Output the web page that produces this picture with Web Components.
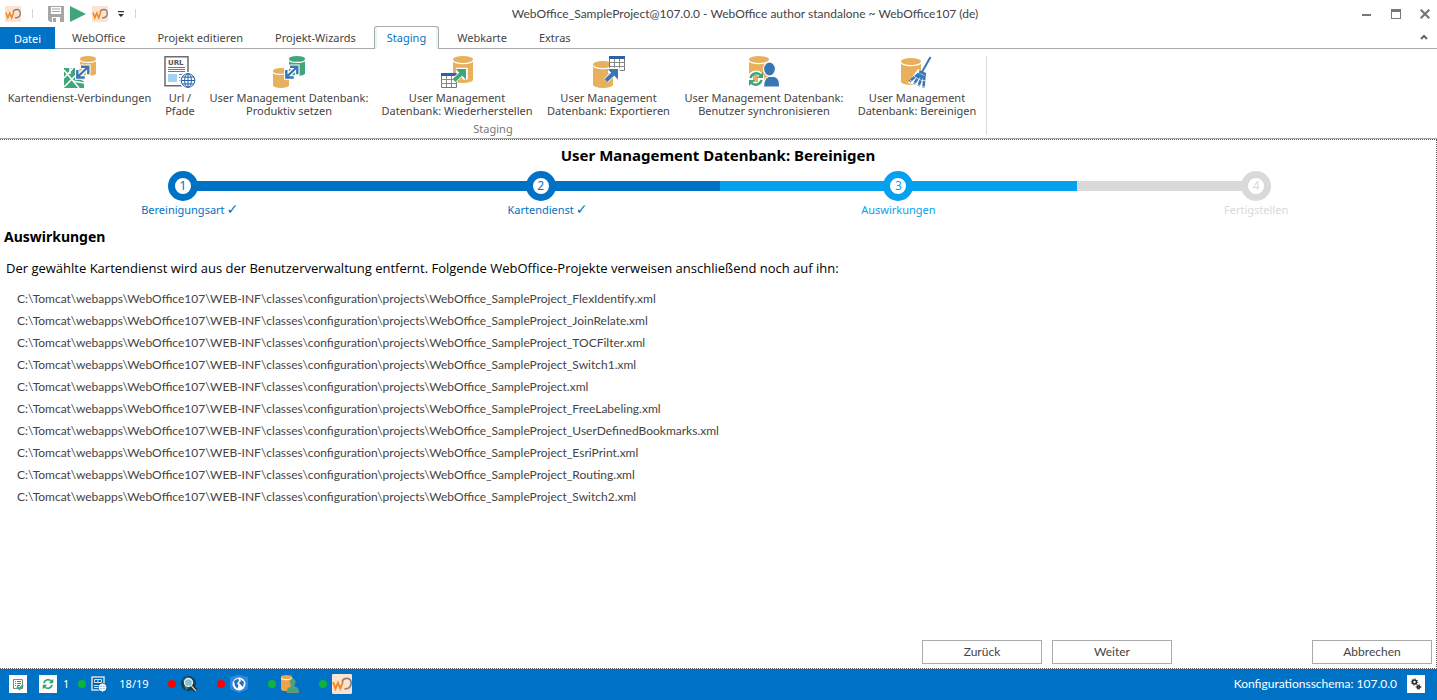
<!DOCTYPE html>
<html lang="de">
<head>
<meta charset="utf-8">
<title>WebOffice author standalone</title>
<style>
html, body { height: 100%; margin: 0; }
body {
  --ui: "Noto Sans", "Open Sans", sans-serif;
  --wide: Lato, "Noto Sans", sans-serif;
  --blue: #0072c6;
  --cyan: #04a2ee;
  --ink: #444;
  font: 11px/13px var(--ui);
  color: var(--ink);
  background: #fff;
}
</style>
</head>
<body>
<wo-app></wo-app>
<script>
const define = (name, html, setup) => {
  const template = document.createElement('template');
  template.innerHTML = html;
  customElements.define(name, class extends HTMLElement {
    constructor() {
      super();
      this.attachShadow({ mode: 'open' }).append(template.content.cloneNode(true));
    }
    connectedCallback() { if (setup) setup(this, this.shadowRoot); }
  });
};

/* ---------- icons ---------- */
const db = (x, y, w, h, c) => {
  const r = w / 2, k = w / 6;
  return `<path fill="${c}" d="M${x} ${y + k}a${r} ${k} 0 0 1 ${w} 0v${h - 2 * k}a${r} ${k} 0 0 1-${w} 0z"/>
  <path fill="none" stroke="#fff" stroke-width="1.200" d="M${x} ${y + k + 1}a${r} ${k} 0 0 0 ${w} 0"/>`;
};
const grid = (x, y) => `<path fill="#fff" stroke="#777" d="M${x + .5} ${y + .5}h15v14h-15z"/>
  <path fill="#2f62a3" d="M${x} ${y}h16v3h-16z"/>
  <path stroke="#8a8a8a" d="M${x + 5.5} ${y + 3}v11M${x + 10.5} ${y + 3}v11M${x} ${y + 6.5}h16M${x} ${y + 10.5}h16"/>`;
const bothLines = 'M14 20.500L23.500 11.500M13.300 14v7.500h7.500M17 10.800h7.300v7.500';
const both = `<g fill="none" stroke-linecap="square"><path d="${bothLines}" stroke="#fff" stroke-width="4.600"/><path d="${bothLines}" stroke="#3a76b4" stroke-width="2.400" stroke-linecap="butt"/></g>`;
const arrow = c => `<path d="M13 24.500L23 15M15 14.500h9v9" fill="none" stroke="#fff" stroke-width="5.500"/>
  <path d="M13 24.500L22 16" stroke="${c}" stroke-width="4"/><path fill="${c}" d="M15 13h10v10.500l-3-3-5-5z"/>`;
const sync = (c, w) => `<g fill="none" stroke="${c}" stroke-width="${w}"><path d="M2.500 7a6 6 0 0 1 10.500-2.500M13.500 9a6 6 0 0 1-10.500 2.500"/></g>
  <path fill="${c}" d="M15 1v6h-6zM1 15v-6h6z"/>`;
const wd = `<rect width="16" height="16" rx="1" fill="#fde3cd"/>
  <path d="M8.300 6.500C8.300 4.500 10 3.500 12 3.500c2.300 0 3.400 1.700 3.300 4-.1 3-2.200 4.600-5.300 4.300" fill="none" stroke="#8b817b" stroke-width="1.400"/>
  <path d="M.9 6.500l1.900 5.200 2-4.700 1.900 4.700 2-5.200" fill="none" stroke="#f08a24" stroke-width="1.600"/>`;
const globe = (x, y, r, c, bg) => `<g transform="translate(${x} ${y})" fill="none" stroke="${c}"><circle r="${r}" fill="${bg}"/>
  <ellipse rx="${r / 2}" ry="${r}"/><path d="M0-${r}v${2 * r}M-${r} 0h${2 * r}M-${r * .85}-${r / 2}h${r * 1.7}M-${r * .85} ${r / 2}h${r * 1.7}"/></g>`;
const O = '#e8b05c', G = '#3fa67c', B = '#3a76b4';
const ICONS = {
  wd: [16, wd],
  save: [16, `<path fill="#a6a6a6" d="M0 0h16v16H2l-2-2z"/><path fill="#fff" d="M3 1h10v7H3zM4 11h8v5H4z"/>
    <path fill="#a6a6a6" d="M4 2.500h8v1H4zM4 5h8v1H4zM5 12h3v4H5z"/>`],
  play: [16, `<path fill="#3fa67c" d="M0 0l16 8-16 8z"/>`],
  more: [8, `<path fill="#333" d="M1 1h6v1.200H1zM1 4h6L4 7z"/>`],
  min: [10, `<path fill="#777" d="M0 5h9v2H0z"/>`],
  max: [10, `<path fill="#777" d="M0 0h10v10H0z"/><path fill="#fff" d="M1 3h8v6H1z"/>`],
  close: [10, `<path stroke="#777" stroke-width="2.200" d="M.7.700l8.600 8.600M9.300.7L.7 9.300"/>`],
  up: [8, `<path fill="none" stroke="#666" stroke-width="2" d="M1 6l3-3 3 3"/>`],
  connections: [32, `<path fill="${G}" d="M0 12h20v20H0z"/>
    <path stroke="#fff" stroke-width="1.500" fill="none" d="M0 14l15 18M0 31l15-15M0 22L9 12M6 12v6M9 25l11 2M13 20l7 5"/>${db(16, 0, 16, 20, O)}${both}`],
  url: [32, `<path fill="#fff" stroke="#6b6b6b" stroke-width="1.500" d="M1 .8h23v29H1z"/>
    <text x="4" y="9" font-size="7" font-weight="bold" font-family="DejaVu Sans, sans-serif" fill="#555">URL</text>
    <path stroke="#777" d="M4 11.500h17M4 13.500h17M4 15.500h17M15 18.500h6M15 21.500h3M15 24.500h2"/><path fill="#a3d3f2" d="M4 18h9v8H4z"/>
    <circle cx="24" cy="24.500" r="8.500" fill="#fff"/>${globe(24, 24.5, 6.8, '#2360a5', '#fff')}`],
  productive: [32, `${db(0, 12, 16, 20, O)}${db(16, 0, 16, 20, G)}${both}`],
  restore: [32, `${db(12, 0, 20, 27, O)}${grid(0, 17)}${arrow(G)}`],
  export: [32, `${db(0, 5, 20, 27, O)}${grid(16, 0)}${arrow(B)}`],
  users: [32, `${db(1, 0, 20, 27, O)}<path fill="${B}" stroke="#fff" stroke-width="1.200" d="M15.500 31c0-6 1-9 5-10.500h6c4 1.500 5.500 4 5 10.500z"/>
    <ellipse cx="21.500" cy="13" rx="6" ry="7" fill="${B}" stroke="#fff" stroke-width="1.200"/>
    <circle cx="8" cy="23" r="8.500" fill="#fff"/><path fill="${O}" d="M5 19h5v7H5z"/><g transform="translate(0 15)">${sync(G, 2.4)}</g>`],
  clean: [32, `${db(0, 2, 20, 27, O)}<path stroke="#fff" stroke-width="4" d="M20 17l10-15"/><path fill="#fff" d="M17 13l10 5-3 14-17-5z"/>
    <path stroke="${B}" stroke-width="2" d="M21 16l8.500-15"/><path fill="${B}" d="M18.500 14l6.500 3v3l-7-3z"/>
    <path stroke="${B}" stroke-width="2.600" stroke-dasharray="5 .6" d="M18 17.500l-9.500 8M19.500 18l-6.500 10M21.500 19l-4 11M23.500 19.500l-1 12"/>`],
  check: [18, `<path fill="#fff" d="M0 0h18v18H0z"/><path fill="none" stroke="#7286a0" d="M4.500 4.500h9v9h-9z"/><path stroke="#4a80bd" d="M6 6.500h1M8 6.500h4M6 8.500h1M8 8.500h4M6 10.500h1M8 10.500h3"/><path fill="none" stroke="${G}" stroke-width="2" d="M8 11.500l2.500 2.500 3.500-4"/>`],
  refresh: [18, `<path fill="#fff" d="M0 0h18v18H0z"/><g transform="translate(3 3) scale(.75)">${sync('#2f9c72', 2)}</g>`],
  server: [16, `<path fill="#0067b5" stroke="#ddd" stroke-width="1.500" d="M1 1h12v13H1z"/><path stroke="#ddd" fill="none" d="M3.500 3.500h7v3h-7zM3 9.500h6M3 11.500h4M6 5h2"/><circle cx="11.500" cy="11.500" r="4.500" fill="#0067b5"/>${globe(11.5, 11.5, 3.5, '#fff', '#1c62a8')}`],
  search: [16, `<circle cx="7.500" cy="7.500" r="7.500" fill="#12405c"/><path fill="#38824f" d="M2 4l4-3 3 2-5 5zM3 10l3-1 1 4-2 1z"/><circle cx="7.500" cy="6.500" r="4" fill="#86c0d4" stroke="#e8f0f2" stroke-width="1.300"/><path stroke="#222" stroke-width="4" d="M10.500 10l4.500 5"/><path stroke="#c9c9b8" stroke-width="1.600" d="M10.500 10l4.500 5"/>`],
  shield: [18, `<path fill="#2b8ae0" d="M9 0l9 2v12l-9 4-9-4V2z"/><circle cx="9" cy="9" r="6.500" fill="#fff"/><path fill="#2570bd" d="M4 6l4-2.500 1 2-2 3 1.500 2-1 3L5 11zM10 4l4 3-1 5-2-2-2-2 2-2z"/>`],
  dbuser: [18, `${db(0, 0, 11, 16, '#f0a44a')}<path fill="${G}" stroke="#8d9477" stroke-width=".8" d="M6 17.500c0-4 1-5 4-5.500v-2c-2-3-1-6 1.500-6s3.500 3 1.500 6v2c4 .5 4.500 2 4.500 5.500z"/>`],
  gear: [18, `<path fill="#fff" d="M0 0h18v18H0z"/><g fill="none" stroke="#222"><circle cx="7.500" cy="7" r="2" stroke-width="1.600"/><circle cx="7.500" cy="7" r="3.200" stroke-dasharray="1 1.500"/><circle cx="11.500" cy="12" r="1.200" stroke-width="1.500"/><circle cx="11.500" cy="12" r="2.300" stroke-dasharray="1 1"/></g>`]
};

define('wo-icon', `<style>:host{display:block;flex:none;line-height:0}svg{display:block}</style>`, (el, root) => {
  const [box, art] = ICONS[el.getAttribute('name')];
  const size = el.getAttribute('size') || box;
  root.innerHTML += `<svg width="${size}" height="${size}" viewBox="0 0 ${box} ${box}" aria-hidden="true">${art}</svg>`;
});

/* ---------- title bar ---------- */
define('wo-titlebar', `<style>
:host{display:flex;align-items:center;height:27px;padding:0 7px 0 5px}
button{border:0;background:none;padding:0;display:block}
.quick,.window{display:flex;align-items:center}
.quick{width:130px;box-sizing:border-box}
.quick i{width:1px;height:9px;background:#d5d5d5}
.quick .first{margin:0 15px 0 11px}
.quick button{margin-right:6px}
.quick .more{margin:0 10px 0 3px}
h1{flex:1;margin:0;text-align:center;font:12px/16px var(--wide);white-space:nowrap;color:#444}
.window{gap:19px;width:75px;justify-content:flex-end}
</style>
<div class="quick"><wo-icon name="wd"></wo-icon><i class="first"></i>
<button aria-label="Speichern"><wo-icon name="save"></wo-icon></button><button aria-label="Starten"><wo-icon name="play"></wo-icon></button><button aria-label="WebOffice"><wo-icon name="wd"></wo-icon></button><button class="more" aria-label="Mehr"><wo-icon name="more"></wo-icon></button><i></i></div>
<h1>WebOffice_SampleProject@107.0.0 - WebOffice author standalone ~ WebOffice107 (de)</h1>
<div class="window"><button aria-label="Minimieren"><wo-icon name="min"></wo-icon></button><button aria-label="Maximieren"><wo-icon name="max"></wo-icon></button><button aria-label="Schließen"><wo-icon name="close"></wo-icon></button></div>`);

/* ---------- tabs ---------- */
define('wo-tab', `<style>
:host{display:block}
button{display:block;box-sizing:border-box;height:22px;padding:0 16px 2px;border:0;background:none;font:inherit;color:#444;white-space:nowrap}
:host([kind=file]) button{width:55px;margin-right:1px;padding:0;background:var(--blue);color:#fff}
:host([kind=active]) button{height:23px;margin:-1px 2px 0;padding:0 12px 1px;border:1px solid #ababab;border-bottom:0;border-radius:3px 3px 0 0;background:#fff;color:var(--blue);box-shadow:inset 2px 0 #e3f7fb,inset -2px 0 #e3f7fb}
</style><button role="tab"><slot></slot></button>`, (el, root) =>
  root.querySelector('button').setAttribute('aria-selected', el.getAttribute('kind') === 'active'));

define('wo-tabs', `<style>
:host{display:flex;align-items:flex-start;height:22px;background:linear-gradient(#ababab,#ababab) bottom/100% 1px no-repeat}
.list{display:flex}
.up{margin:6px 9px 0 auto;border:0;background:none;padding:0}
</style><div class="list" role="tablist"><slot></slot></div><button class="up" aria-label="Menüband reduzieren"><wo-icon name="up"></wo-icon></button>`);

/* ---------- ribbon ---------- */
define('wo-command', `<style>
:host{display:block;min-width:0}
button{display:flex;flex-direction:column;align-items:center;width:100%;border:0;background:none;padding:0;font:inherit;color:#444;gap:3px}
.text{white-space:pre;text-align:center}
</style><button><span class="icon"></span><span class="text"><slot></slot></span></button>`, (el, root) => {
  const icon = document.createElement('wo-icon');
  icon.setAttribute('name', el.getAttribute('icon'));
  root.querySelector('.icon').replaceChildren(icon);
});
define('wo-ribbon', `<style>
:host{display:flex;height:90px;padding-top:7px;box-sizing:border-box;border-bottom:1px solid #ababab}
section{display:flex;flex-direction:column;justify-content:space-between;height:79px;border-right:1px solid #dadada}
.commands{display:grid;grid-template-columns:159px 42px 176px 160px 143px 168px 138px}
footer{text-align:center;color:#777}
</style><section><div class="commands"><slot></slot></div><footer>Staging</footer></section>`);

/* ---------- stepper ---------- */
define('wo-step', `<style>
:host{flex:1;--c:#d9d9d9;display:flex;flex-direction:column;align-items:center;color:var(--c)}
:host([state=done]){--c:var(--blue)}
:host([state=current]){--c:var(--cyan)}
.track{display:flex;align-items:center;width:100%;height:30px}
.track::before,.track::after{content:"";flex:1;height:10px;background:var(--c)}
:host(:first-of-type) .track::before,:host(:last-of-type) .track::after{background:none}
b{box-sizing:border-box;width:30px;height:30px;margin:0 -1px;border:7px solid var(--c);border-radius:50%;background:#fff;font:12px/16px var(--ui);text-align:center}
.label{position:relative;margin-top:1px;line-height:15px;white-space:nowrap}
:host([state=done]) .label::after{content:"✓";position:absolute;left:100%;margin-left:2px;font:bold 14px/15px "DejaVu Sans",sans-serif}
</style><div class="track"><b></b></div><div class="label"><slot></slot></div>`, (el, root) => {
  root.querySelector('b').textContent = el.getAttribute('number');
});
define('wo-stepper', `<style>:host{display:flex}</style><slot></slot>`);

/* ---------- wizard page ---------- */
define('wo-paths', `<style>
:host{display:block}
ul{list-style:none;margin:0;padding:0 0 0 17px}
li{font:12px/22px var(--wide);color:#444;white-space:nowrap}
</style><ul></ul>`, (el, root) => {
  root.querySelector('ul').innerHTML = ['_FlexIdentify', '_JoinRelate', '_TOCFilter', '_Switch1', '', '_FreeLabeling', '_UserDefinedBookmarks', '_EsriPrint', '_Routing', '_Switch2']
    .map(n => `<li>C:\\Tomcat\\webapps\\WebOffice107\\WEB-INF\\classes\\configuration\\projects\\WebOffice_SampleProject${n}.xml</li>`).join('');
});
define('wo-button', `<style>
:host{display:block}
button{display:block;box-sizing:border-box;width:120px;height:24px;padding:0;border:1px solid #ababab;background:#fff;color:#444;font:12px/16px var(--wide)}
</style><button><slot></slot></button>`);
define('wo-wizard', `<style>
:host{display:flex;flex-direction:column;flex:1;box-sizing:border-box;border:1px dotted #555;border-left:0}
h2,h3,p{margin:0;color:#000}
h2{font:bold 15px/20px var(--ui);text-align:center;padding:5px 0 6px}
wo-stepper{margin:0 1px 0 4px}
h3{font:bold 14px/20px var(--ui);padding:10px 4px 0}
p{font:13px/20px "Open Sans",var(--ui);padding:11px 6px 10px}
nav{display:flex;gap:10px;justify-content:flex-end;margin-top:auto;padding:0 4px 4px}
.cancel{margin-left:130px}
</style>
<h2>User Management Datenbank: Bereinigen</h2>
<wo-stepper><wo-step number="1" state="done">Bereinigungsart</wo-step><wo-step number="2" state="done">Kartendienst</wo-step><wo-step number="3" state="current">Auswirkungen</wo-step><wo-step number="4">Fertigstellen</wo-step></wo-stepper>
<h3>Auswirkungen</h3>
<p>Der gewählte Kartendienst wird aus der Benutzerverwaltung entfernt. Folgende WebOffice-Projekte verweisen anschließend noch auf ihn:</p>
<wo-paths></wo-paths>
<nav><wo-button>Zurück</wo-button><wo-button>Weiter</wo-button><wo-button class="cancel">Abbrechen</wo-button></nav>`);

/* ---------- status bar ---------- */
define('wo-lamp', `<style>:host{display:flex;align-items:center;gap:5px}i{width:8px;height:8px;border-radius:50%;background:#0cb43c}:host([off]) i{background:#f00}</style><i></i><slot></slot>`);
define('wo-statusbar', `<style>
:host{display:flex;align-items:center;box-sizing:border-box;height:31px;padding:0 12px 2px 9px;background:var(--blue);color:#fff}
button{display:block;border:0;background:none;padding:0}
.refresh{margin:0 6px 0 12px}
.one{margin:0 9px 0 0}
.count{margin:0 19px 0 12px}
wo-lamp + wo-lamp{margin-left:20px}
.schema{margin:0 10px 0 auto;font:12px/16px var(--wide)}
</style>
<button aria-label="Prüfen"><wo-icon name="check"></wo-icon></button><button class="refresh" aria-label="Aktualisieren"><wo-icon name="refresh"></wo-icon></button><span class="one">1</span>
<wo-lamp><wo-icon name="server"></wo-icon></wo-lamp><span class="count">18/19</span>
<wo-lamp off><wo-icon name="search"></wo-icon></wo-lamp><wo-lamp off><wo-icon name="shield"></wo-icon></wo-lamp><wo-lamp><wo-icon name="dbuser"></wo-icon></wo-lamp><wo-lamp><wo-icon name="wd" size="20"></wo-icon></wo-lamp>
<span class="schema">Konfigurationsschema: 107.0.0</span><button aria-label="Einstellungen"><wo-icon name="gear"></wo-icon></button>`);

define('wo-app', `<style>:host{display:flex;flex-direction:column;min-height:100vh}wo-titlebar,wo-tabs,wo-ribbon,wo-statusbar{flex:none}</style>
<wo-titlebar></wo-titlebar>
<wo-tabs><wo-tab kind="file">Datei</wo-tab><wo-tab>WebOffice</wo-tab><wo-tab>Projekt editieren</wo-tab><wo-tab>Projekt-Wizards</wo-tab><wo-tab kind="active">Staging</wo-tab><wo-tab>Webkarte</wo-tab><wo-tab>Extras</wo-tab></wo-tabs>
<wo-ribbon><wo-command icon="connections">Kartendienst-Verbindungen</wo-command><wo-command icon="url">Url /
Pfade</wo-command><wo-command icon="productive">User Management Datenbank:
Produktiv setzen</wo-command><wo-command icon="restore">User Management
Datenbank: Wiederherstellen</wo-command><wo-command icon="export">User Management
Datenbank: Exportieren</wo-command><wo-command icon="users">User Management Datenbank:
Benutzer synchronisieren</wo-command><wo-command icon="clean">User Management
Datenbank: Bereinigen</wo-command></wo-ribbon>
<wo-wizard></wo-wizard>
<wo-statusbar></wo-statusbar>`);
</script>
</body>
</html>
